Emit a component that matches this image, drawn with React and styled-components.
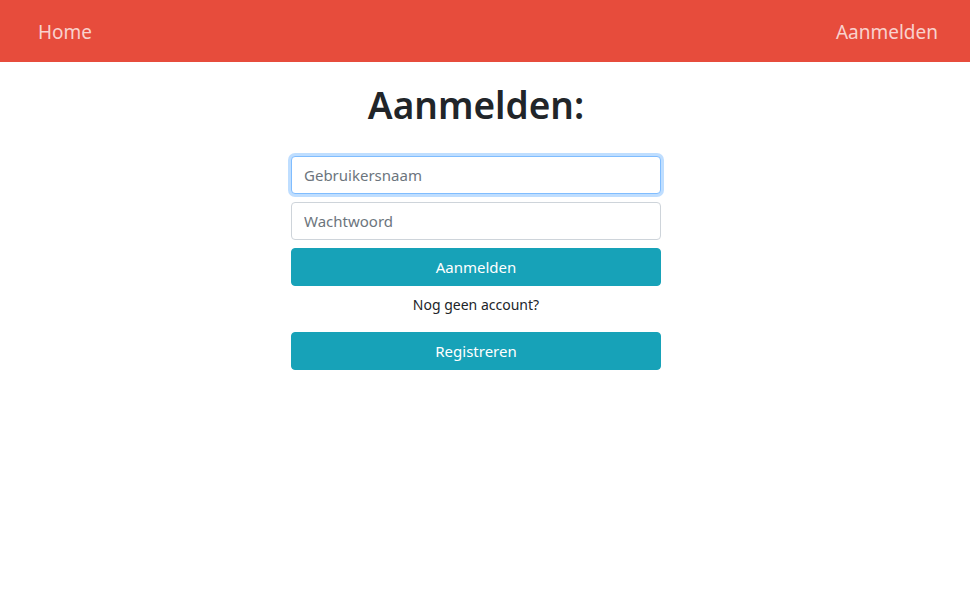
import React from "react";
import styled, { createGlobalStyle } from "styled-components";

const GlobalStyle = createGlobalStyle`
  html, body {
    margin: 0;
    padding: 0;
    background: #fff;
    font-family: "Noto Sans", "Open Sans", sans-serif;
    color: #212529;
  }
  * { box-sizing: border-box; }
`;

const Navbar = styled.nav`
  height: 62px;
  background: #e74c3c;
  display: flex;
  align-items: center;
  justify-content: space-between;
  padding: 2px 32px 0 38px;
`;

const NavLink = styled.a`
  color: rgba(255, 255, 255, 0.75);
  font-size: 19px;
  text-decoration: none;
  cursor: pointer;
`;

const Main = styled.main`
  display: flex;
  flex-direction: column;
  align-items: center;
  padding-right: 18px;
`;

const Title = styled.h1`
  margin: 19px 0 27px;
  font-size: 37px;
  font-weight: 600;
  line-height: 48px;
  color: #212529;
`;

const Form = styled.form`
  width: 370px;
  display: flex;
  flex-direction: column;
  gap: 8px;
`;

const Input = styled.input`
  height: 38px;
  width: 100%;
  padding: 6px 12px;
  font-family: inherit;
  font-size: 15px;
  color: #495057;
  border: 1px solid #ced4da;
  border-radius: 4px;
  outline: none;
  &::placeholder { color: #6c757d; }
  &:focus {
    border-color: #80bdff;
    box-shadow: 0 0 0 3px rgba(0, 123, 255, 0.25);
  }
`;

const Button = styled.button`
  height: 38px;
  width: 100%;
  background: #17a2b8;
  border: 1px solid #17a2b8;
  border-radius: 4px;
  color: #fff;
  font-family: inherit;
  font-size: 15px;
  cursor: pointer;
`;

const Hint = styled.p`
  margin: -1px 0 7px;
  text-align: center;
  font-size: 14px;
  line-height: 24px;
`;

export default function App() {
  return (
    <>
      <GlobalStyle />
      <Navbar>
        <NavLink>Home</NavLink>
        <NavLink>Aanmelden</NavLink>
      </Navbar>
      <Main>
        <Title>Aanmelden:</Title>
        <Form onSubmit={e => e.preventDefault()}>
          <Input type="text" placeholder="Gebruikersnaam" autoFocus />
          <Input type="password" placeholder="Wachtwoord" />
          <Button type="submit">Aanmelden</Button>
          <Hint>Nog geen account?</Hint>
          <Button type="button">Registreren</Button>
        </Form>
      </Main>
    </>
  );
}
